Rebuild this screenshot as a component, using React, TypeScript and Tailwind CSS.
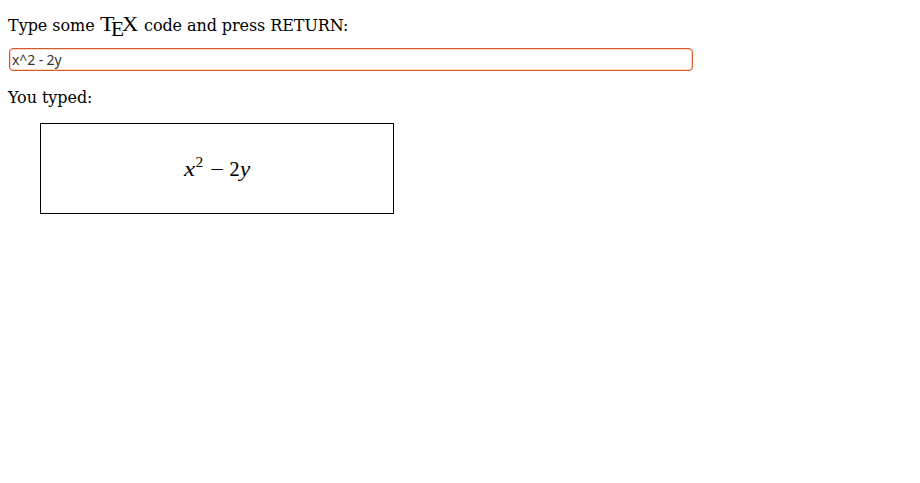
export default function App() {
  return (
    <main className="min-h-[483px] bg-white px-2 pt-4 font-['DejaVu_Serif',serif] text-base leading-[19px] text-black">
      <p className="flex h-[19px] items-start whitespace-pre">
        <span className="w-[91.5px] tracking-[-0.04px]">Type some </span>
        <span className="flex w-[39.5px] font-['Liberation_Serif',serif] text-[21.5px]">
          <span className="-mt-px w-[11.5px] origin-left scale-x-110">T</span>
          <span className="mt-1 w-[10.5px]">E</span>
          <span className="-mt-px w-[16px] origin-left scale-x-105">X</span>
        </span>
        <span className="tracking-[-0.08px]"> code and press RETURN:</span>
      </p>
      <input
        defaultValue="x^2 - 2y"
        className="mt-[13px] ml-px block h-[23px] w-[684px] rounded-[4px] border border-[#d45a2b] px-[2px] font-['Noto_Sans','Open_Sans',sans-serif] text-[14px] tracking-[-0.1px] text-[#333] shadow-[inset_0_0_0_1px_#fbd5c5] outline-none"
      />
      <p className="mt-[17px] tracking-[-0.06px]">You typed:</p>
      <div className="mt-4 ml-8 flex h-[91px] w-[354px] items-center justify-center border border-black font-['Liberation_Serif',serif] text-[20px]">
        <span className="flex pt-px">
          <i className="w-[12px] origin-left scale-x-125">x</i>
          <span className="-mt-2 w-[14.5px] text-[15.5px]">2</span>
          <span className="w-[19.5px] origin-left scale-x-125">−</span>
          <span className="w-[10.5px] [-webkit-text-stroke:0.2px_black]">2</span>
          <i className="w-[10.5px] origin-left scale-x-115">y</i>
        </span>
      </div>
    </main>
  );
}
